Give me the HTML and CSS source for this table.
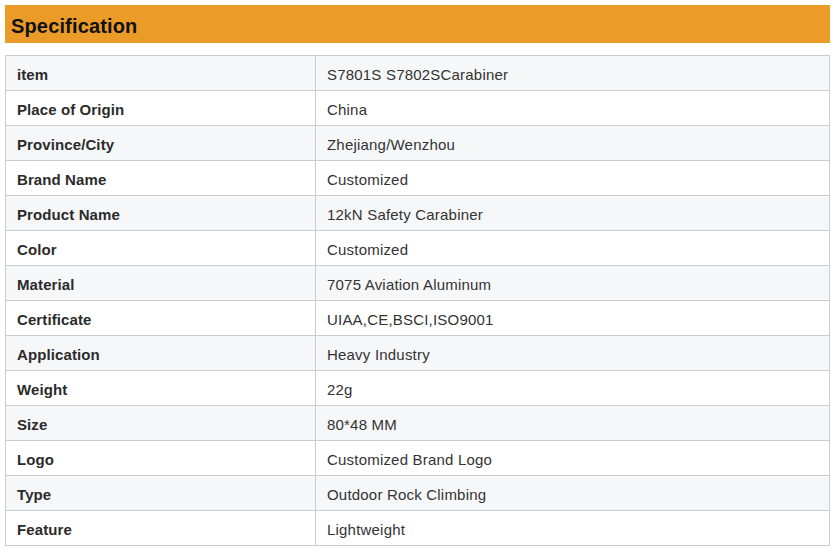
FILE: index.html
```html
<!DOCTYPE html>
<html>
<head>
<meta charset="utf-8">
<link rel="stylesheet" href="styles.css">
</head>
<body>
<div class="page">
  <h2 class="title">Specification</h2>
  <table class="spec">
    <tbody>
      <tr><th>item</th><td>S7801S S7802SCarabiner</td></tr>
      <tr><th>Place of Origin</th><td>China</td></tr>
      <tr><th>Province/City</th><td>Zhejiang/Wenzhou</td></tr>
      <tr><th>Brand Name</th><td>Customized</td></tr>
      <tr><th>Product Name</th><td>12kN Safety Carabiner</td></tr>
      <tr><th>Color</th><td>Customized</td></tr>
      <tr><th>Material</th><td>7075 Aviation Aluminum</td></tr>
      <tr><th>Certificate</th><td>UIAA,CE,BSCI,ISO9001</td></tr>
      <tr><th>Application</th><td>Heavy Industry</td></tr>
      <tr><th>Weight</th><td>22g</td></tr>
      <tr><th>Size</th><td>80*48 MM</td></tr>
      <tr><th>Logo</th><td>Customized Brand Logo</td></tr>
      <tr><th>Type</th><td>Outdoor Rock Climbing</td></tr>
      <tr><th>Feature</th><td>Lightweight</td></tr>
    </tbody>
  </table>
</div>
</body>
</html>
```
FILE: styles.css
```css
html, body {
  margin: 0;
  padding: 0;
  background: #ffffff;
}
.page {
  padding: 5px 9px 0 5px;
  font-family: "Liberation Sans", Arial, sans-serif;
}
.title {
  margin: 0;
  height: 38px;
  line-height: 42px;
  padding-left: 6px;
  background: #eb9b27;
  color: #111111;
  font-size: 20px;
  font-weight: bold;
  letter-spacing: 0.15px;
}
.spec {
  margin-top: 12px;
  width: 100%;
  border-collapse: collapse;
  font-size: 15px;
  color: #333333;
}
.spec th, .spec td {
  border: 1px solid #cccccc;
  height: 35px;
  padding: 2px 11px 0;
  text-align: left;
  vertical-align: middle;
  box-sizing: border-box;
}
.spec td {
  letter-spacing: 0.2px;
}
.spec th {
  width: 310px;
  font-weight: bold;
  color: #2b2b2b;
  letter-spacing: 0.1px;
}
.spec tr:nth-child(odd) {
  background: #f6f7f9;
}
.spec tr:nth-child(even) {
  background: #ffffff;
}
```
